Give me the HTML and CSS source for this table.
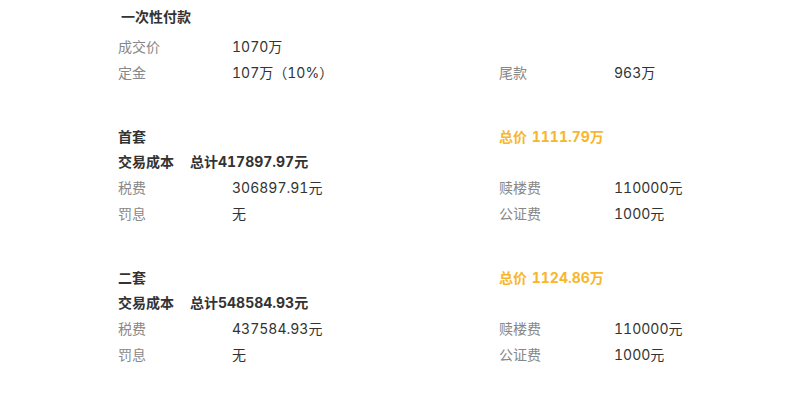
FILE: index.html
```html
<!DOCTYPE html>
<html lang="zh-CN">
<head>
<meta charset="utf-8">
<link rel="stylesheet" href="styles.css">
</head>
<body>
<div class="page">
  <section class="sec sec-first">
    <div class="title">一次性付款</div>
    <div class="row">
      <span class="lab">成交价</span><span class="val">1070万</span>
      <span></span><span></span>
    </div>
    <div class="row">
      <span class="lab">定金</span><span class="val">107万（10%）</span>
      <span class="lab">尾款</span><span class="val">963万</span>
    </div>
  </section>

  <section class="sec">
    <div class="row head">
      <span class="name">首套</span><span></span>
      <span class="total">总价 1111.79万</span>
    </div>
    <div class="row cost">
      <span class="name">交易成本</span><span class="name sum">总计417897.97元</span>
    </div>
    <div class="row">
      <span class="lab">税费</span><span class="val">306897.91元</span>
      <span class="lab">赎楼费</span><span class="val">110000元</span>
    </div>
    <div class="row">
      <span class="lab">罚息</span><span class="val">无</span>
      <span class="lab">公证费</span><span class="val">1000元</span>
    </div>
  </section>

  <section class="sec">
    <div class="row head">
      <span class="name">二套</span><span></span>
      <span class="total">总价 1124.86万</span>
    </div>
    <div class="row cost">
      <span class="name">交易成本</span><span class="name sum">总计548584.93元</span>
    </div>
    <div class="row">
      <span class="lab">税费</span><span class="val">437584.93元</span>
      <span class="lab">赎楼费</span><span class="val">110000元</span>
    </div>
    <div class="row">
      <span class="lab">罚息</span><span class="val">无</span>
      <span class="lab">公证费</span><span class="val">1000元</span>
    </div>
  </section>
</div>
</body>
</html>
```

FILE: styles.css
```css
* { box-sizing: border-box; }
html, body { margin: 0; padding: 0; background: #fff; }
body {
  font-family: Inter, "Noto Sans CJK SC", sans-serif;
  font-size: 14px;
  font-variant-numeric: tabular-nums;
  color: #333;
}
.page {
  padding: 4px 0 0 118px;
}
.sec { margin-top: 38px; }
.sec-first { margin-top: 0; }
.title {
  height: 26px;
  line-height: 26px;
  font-weight: bold;
  padding-left: 3px;
  margin-bottom: 4px;
  font-size: 14px;
}
.row {
  display: grid;
  grid-template-columns: 114px 267px 115px 1fr;
  height: 26px;
  line-height: 26px;
  white-space: nowrap;
}
.row.head { height: 25px; line-height: 25px; }
.row.cost { grid-template-columns: 72px 1fr; }
.lab { color: #888; }
.val { color: #333; }
.name { font-weight: bold; color: #333; }
.total { font-weight: bold; color: #f8b62b; word-spacing: 1px; }
```
